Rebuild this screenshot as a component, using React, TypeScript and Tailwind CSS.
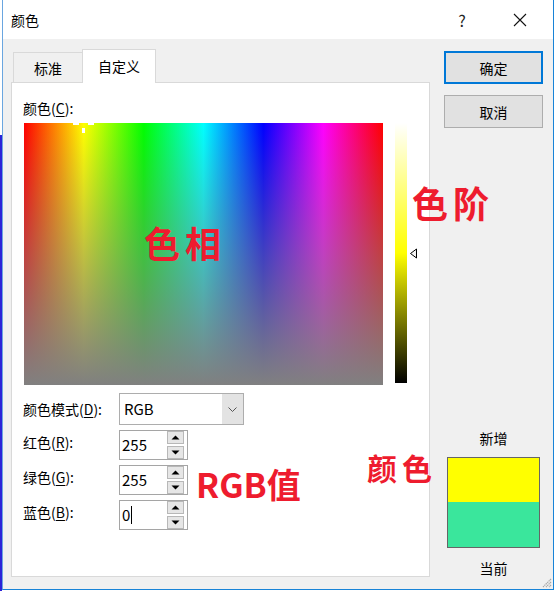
import React from "react";

const F = "font-['Noto_Sans_CJK_SC','Noto_Sans',sans-serif]";

function Up() {
  return (
    <svg width="9" height="5" viewBox="0 0 9 5">
      <path d="M0.5 4.5 L4.5 0.5 L8.5 4.5 Z" fill="#000" />
    </svg>
  );
}
function Down() {
  return (
    <svg width="9" height="5" viewBox="0 0 9 5">
      <path d="M0.5 0.5 L4.5 4.5 L8.5 0.5 Z" fill="#000" />
    </svg>
  );
}

function Spinner({ value, caret }: { value: string; caret?: boolean }) {
  return (
    <div className="flex h-[30px] w-[69px] items-center border border-[#a5a5a5] bg-white">
      <div className="flex flex-1 items-center pl-[2px] text-[15px] leading-[20px]">
        {value}
        {caret && <span className="ml-[1px] inline-block h-[18px] w-[1px] bg-black" />}
      </div>
      <div className="mr-[3px] flex flex-col gap-[2px]">
        <div className="flex h-[13px] w-[17px] items-center justify-center border border-[#b8b8b8] bg-[#e6e6e6]">
          <Up />
        </div>
        <div className="flex h-[13px] w-[17px] items-center justify-center border border-[#b8b8b8] bg-[#e6e6e6]">
          <Down />
        </div>
      </div>
    </div>
  );
}

function Label({ text, k, up }: { text: string; k: string; up?: boolean }) {
  return (
    <div className={`w-[96px] -ml-px text-[14px] leading-[20px] ${up ? "relative -top-[3px]" : ""}`}>
      {text}(<span className="underline underline-offset-2">{k}</span>):
    </div>
  );
}

export default function App() {
  return (
    <div className={`relative flex h-[591px] w-[556px] overflow-hidden bg-white text-black ${F}`}>
      {/* outside strip on the left */}
      <div className="flex h-full w-[2px] flex-col">
        <div className="h-[135px] bg-white" />
        <div className="flex-1 bg-[#2a22d8]" />
      </div>

      {/* dialog */}
      <div className="flex h-[590px] w-[552px] flex-col border-b border-l border-r border-b-[#1883d7] border-l-[#6aa6e0] border-r-[#1883d7] bg-[#f0f0f0]">
        {/* title bar */}
        <div className="flex h-[39px] items-center bg-white">
          <div className="pl-[8px] text-[14px] leading-[20px]">颜色</div>
          <div className="flex-1" />
          <div className="w-[20px] text-center text-[16px] leading-[20px] text-[#222]">?</div>
          <div className="ml-[38px] mr-[23px] flex h-[20px] w-[20px] items-center justify-center">
            <svg width="14" height="14" viewBox="0 0 14 14">
              <path d="M1 1 L13 13 M13 1 L1 13" stroke="#111" strokeWidth="1.1" />
            </svg>
          </div>
        </div>

        {/* body */}
        <div className="relative flex flex-1">
          {/* left column: tabs + panel */}
          <div className="ml-[8px] flex flex-col pt-[11px]">
            <div className="flex h-[32px] items-end pl-[2px]">
              <div className="flex h-[30px] w-[69px] items-center justify-center border-l border-t border-[#d9d9d9] text-[14px] leading-[20px]">
                标准
              </div>
              <div className="relative z-10 -mb-px flex h-[34px] w-[74px] items-center justify-center border-l border-r border-t border-[#d9d9d9] bg-white pb-[1px] text-[14px] leading-[20px]">
                自定义
              </div>
            </div>
            <div className="flex h-[495px] w-[419px] flex-col border border-[#d9d9d9] bg-white pl-[12px]">
              <div className="mt-[15px] h-[20px]">
                <Label text="颜色" k="C" />
              </div>
              {/* spectrum + luminance */}
              <div className="mt-[5px] flex">
                <div className="relative h-[262px] w-[359px] bg-[linear-gradient(to_right,#f00,#ff0,#0f0,#0ff,#00f,#f0f,#f00)]">
                  <div className="absolute inset-0 bg-[linear-gradient(to_bottom,rgba(128,128,128,0),#808080)]" />
                  <div className="absolute left-[49px] top-0 h-[2px] w-[6px] bg-white" />
                  <div className="absolute left-[64px] top-0 h-[2px] w-[6px] bg-white" />
                  <div className="absolute left-[58px] top-[5px] h-[5px] w-[3px] bg-white" />
                </div>
                <div className="relative ml-[12px] h-[260px] w-[12px] bg-[linear-gradient(to_bottom,#fff,#ff0,#000)]">
                  <svg className="absolute left-[14px] top-[125px]" width="9" height="11" viewBox="0 0 9 11">
                    <path d="M7.5 1 L1.5 5.5 L7.5 10 Z" fill="#f4f4f4" stroke="#000" strokeWidth="1" />
                  </svg>
                </div>
              </div>
              {/* form */}
              <div className="mt-[8px] flex h-[32px] items-center">
                <Label text="颜色模式" k="D" />
                <div className="flex h-[32px] w-[125px] border border-[#adadad] bg-white">
                  <div className="flex flex-1 items-center pl-[4px] text-[15px] leading-[20px]">RGB</div>
                  <div className="flex w-[21px] items-center justify-center bg-[#e3e3e3]">
                    <svg width="9" height="5" viewBox="0 0 9 5">
                      <path d="M0.5 0.5 L4.5 4.5 L8.5 0.5" fill="none" stroke="#555" strokeWidth="1" />
                    </svg>
                  </div>
                </div>
              </div>
              <div className="mt-[5px] flex items-center">
                <Label text="红色" k="R" up />
                <Spinner value="255" />
              </div>
              <div className="mt-[5px] flex items-center">
                <Label text="绿色" k="G" up />
                <Spinner value="255" />
              </div>
              <div className="mt-[5px] flex items-center">
                <Label text="蓝色" k="B" up />
                <Spinner value="0" caret />
              </div>
            </div>
          </div>

          {/* right column */}
          <div className="ml-[14px] flex w-[99px] flex-col items-center pt-[12px]">
            <div className="flex h-[33px] w-[99px] items-center justify-center border-2 border-[#0078d7] bg-[#e1e1e1] text-[14px] leading-[20px]">
              确定
            </div>
            <div className="mt-[11px] flex h-[33px] w-[99px] items-center justify-center border border-[#adadad] bg-[#e1e1e1] text-[14px] leading-[20px]">
              取消
            </div>
            <div className="mt-[300px] h-[20px] text-[14px] leading-[20px]">新增</div>
            <div className="mt-[9px] flex h-[91px] w-[93px] flex-col border border-[#666]">
              <div className="h-[44px] bg-[#ffff00]" />
              <div className="flex-1 bg-[#3ae69c]" />
            </div>
            <div className="mt-[10px] h-[20px] text-[14px] leading-[20px]">当前</div>
          </div>

          {/* size grip */}
          <svg className="absolute bottom-[1px] right-[1px]" width="12" height="12" viewBox="0 0 12 12">
            <path d="M11 3 L3 11 M11 6 L6 11 M11 9 L9 11" stroke="#a8a8a8" strokeWidth="1.2" strokeDasharray="1.4 0.6" />
          </svg>
        </div>
      </div>
      <div className="w-[2px] bg-white" />

      {/* red annotations */}
      <div className="pointer-events-none absolute left-[144px] top-[224px] text-[36px] font-bold leading-[36px] tracking-[5px] text-[#ee1c2e]">
        色相
      </div>
      <div className="pointer-events-none absolute left-[412px] top-[184px] text-[36px] font-bold leading-[36px] tracking-[5px] text-[#ee1c2e]">
        色阶
      </div>
      <div className="pointer-events-none absolute left-[367px] top-[452px] text-[30px] font-bold leading-[30px] tracking-[5px] text-[#ee1c2e]">
        颜色
      </div>
      <div className="pointer-events-none absolute left-[196px] top-[466px] text-[34px] font-bold leading-[35px] text-[#ee1c2e]">
        RGB值
      </div>
    </div>
  );
}
